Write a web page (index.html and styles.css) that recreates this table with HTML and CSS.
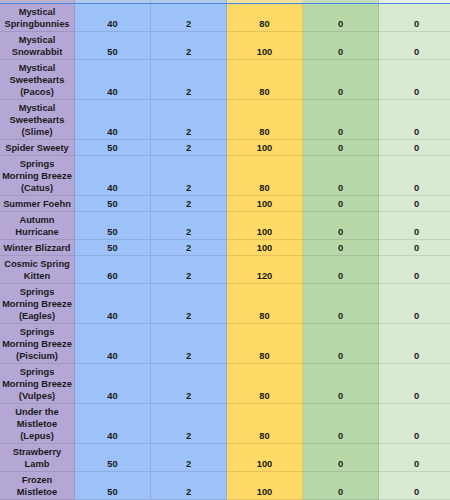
FILE: index.html
```html
<!DOCTYPE html>
<html>
<head>
<meta charset="utf-8">
<link rel="stylesheet" href="styles.css">
</head>
<body>
<div class="sheet">
  <div class="strip">
    <div class="s c-name"></div><div class="s c-blue"></div><div class="s c-blue"></div><div class="s c-yellow"></div><div class="s c-green"></div><div class="s c-lgreen"></div>
  </div>
  <div class="grid">
    <div class="cell c-name">Mystical<br>Springbunnies</div><div class="cell c-blue">40</div><div class="cell c-blue">2</div><div class="cell c-yellow">80</div><div class="cell c-green">0</div><div class="cell c-lgreen">0</div>
    <div class="cell c-name">Mystical<br>Snowrabbit</div><div class="cell c-blue">50</div><div class="cell c-blue">2</div><div class="cell c-yellow">100</div><div class="cell c-green">0</div><div class="cell c-lgreen">0</div>
    <div class="cell c-name">Mystical<br>Sweethearts<br>(Pacos)</div><div class="cell c-blue">40</div><div class="cell c-blue">2</div><div class="cell c-yellow">80</div><div class="cell c-green">0</div><div class="cell c-lgreen">0</div>
    <div class="cell c-name">Mystical<br>Sweethearts<br>(Slime)</div><div class="cell c-blue">40</div><div class="cell c-blue">2</div><div class="cell c-yellow">80</div><div class="cell c-green">0</div><div class="cell c-lgreen">0</div>
    <div class="cell c-name">Spider Sweety</div><div class="cell c-blue">50</div><div class="cell c-blue">2</div><div class="cell c-yellow">100</div><div class="cell c-green">0</div><div class="cell c-lgreen">0</div>
    <div class="cell c-name">Springs<br>Morning Breeze<br>(Catus)</div><div class="cell c-blue">40</div><div class="cell c-blue">2</div><div class="cell c-yellow">80</div><div class="cell c-green">0</div><div class="cell c-lgreen">0</div>
    <div class="cell c-name">Summer Foehn</div><div class="cell c-blue">50</div><div class="cell c-blue">2</div><div class="cell c-yellow">100</div><div class="cell c-green">0</div><div class="cell c-lgreen">0</div>
    <div class="cell c-name">Autumn<br>Hurricane</div><div class="cell c-blue">50</div><div class="cell c-blue">2</div><div class="cell c-yellow">100</div><div class="cell c-green">0</div><div class="cell c-lgreen">0</div>
    <div class="cell c-name">Winter Blizzard</div><div class="cell c-blue">50</div><div class="cell c-blue">2</div><div class="cell c-yellow">100</div><div class="cell c-green">0</div><div class="cell c-lgreen">0</div>
    <div class="cell c-name">Cosmic Spring<br>Kitten</div><div class="cell c-blue">60</div><div class="cell c-blue">2</div><div class="cell c-yellow">120</div><div class="cell c-green">0</div><div class="cell c-lgreen">0</div>
    <div class="cell c-name">Springs<br>Morning Breeze<br>(Eagles)</div><div class="cell c-blue">40</div><div class="cell c-blue">2</div><div class="cell c-yellow">80</div><div class="cell c-green">0</div><div class="cell c-lgreen">0</div>
    <div class="cell c-name">Springs<br>Morning Breeze<br>(Piscium)</div><div class="cell c-blue">40</div><div class="cell c-blue">2</div><div class="cell c-yellow">80</div><div class="cell c-green">0</div><div class="cell c-lgreen">0</div>
    <div class="cell c-name">Springs<br>Morning Breeze<br>(Vulpes)</div><div class="cell c-blue">40</div><div class="cell c-blue">2</div><div class="cell c-yellow">80</div><div class="cell c-green">0</div><div class="cell c-lgreen">0</div>
    <div class="cell c-name">Under the<br>Mistletoe<br>(Lepus)</div><div class="cell c-blue">40</div><div class="cell c-blue">2</div><div class="cell c-yellow">80</div><div class="cell c-green">0</div><div class="cell c-lgreen">0</div>
    <div class="cell c-name">Strawberry<br>Lamb</div><div class="cell c-blue">50</div><div class="cell c-blue">2</div><div class="cell c-yellow">100</div><div class="cell c-green">0</div><div class="cell c-lgreen">0</div>
    <div class="cell c-name">Frozen<br>Mistletoe</div><div class="cell c-blue">50</div><div class="cell c-blue">2</div><div class="cell c-yellow">100</div><div class="cell c-green">0</div><div class="cell c-lgreen">0</div>
  </div>
</div>
</body>
</html>
```
FILE: styles.css
```css
html, body {
  margin: 0;
  padding: 0;
  background: #ffffff;
  overflow: hidden;
}

.sheet {
  width: 450px;
  height: 500px;
  overflow: hidden;
  font-family: "Liberation Sans", Arial, sans-serif;
  font-weight: bold;
  font-size: 9.3px;
  color: #1a1a1a;
}

.strip {
  display: grid;
  grid-template-columns: 75px repeat(5, 76px);
  height: 3px;
  border-bottom: 1px solid #4a86e8;
}

.strip .s {
  box-sizing: border-box;
  border-right: 1px solid rgba(0, 0, 0, 0.08);
  filter: brightness(1.04) saturate(0.6);
}

.grid {
  display: grid;
  grid-template-columns: 75px repeat(5, 76px);
}

.cell {
  box-sizing: border-box;
  display: flex;
  flex-direction: column;
  justify-content: flex-end;
  align-items: center;
  text-align: center;
  white-space: nowrap;
  padding: 2px 0 1px;
  line-height: 12px;
  border-right: 1px solid rgba(0, 0, 0, 0.1);
  border-bottom: 1px solid rgba(0, 0, 0, 0.1);
}

.c-name { background: #b4a7d6; }
.c-blue { background: #9dc2f9; }
.c-yellow { background: #ffd966; }
.c-green { background: #b6d7a8; }
.c-lgreen { background: #d9ead3; }
```
